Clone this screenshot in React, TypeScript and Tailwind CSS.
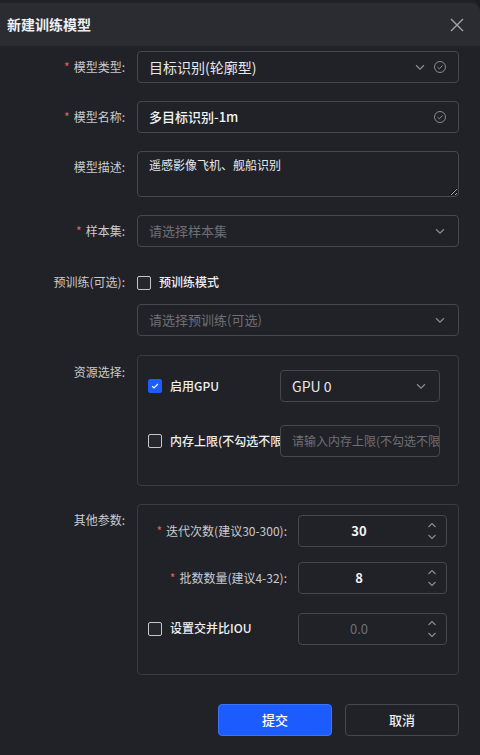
import React, { useState } from 'react';

const font = { fontFamily: '"Noto Sans CJK SC", "Noto Sans", sans-serif' };

// 下拉箭头
function ChevronDown({ className = '' }: { className?: string }) {
  return (
    <svg viewBox="0 0 16 16" className={className} fill="none" stroke="currentColor" strokeWidth="1.3">
      <path d="M3.5 6l4.5 4.5L12.5 6" />
    </svg>
  );
}

// 校验通过图标
function CheckCircle({ className = '' }: { className?: string }) {
  return (
    <svg viewBox="0 0 16 16" className={className} fill="none" stroke="currentColor" strokeWidth="1.1">
      <circle cx="8" cy="8" r="6.3" />
      <path d="M5.2 8.2l2 1.9 3.6-3.8" />
    </svg>
  );
}

function Stepper() {
  return (
    <div className="absolute right-[9px] top-0 flex h-full flex-col items-center justify-center gap-[6px] text-[#8d8e94]">
      <svg viewBox="0 0 10 6" className="h-[6px] w-[10px]" fill="none" stroke="currentColor" strokeWidth="1.1">
        <path d="M1.5 5L5 1.5 8.5 5" />
      </svg>
      <svg viewBox="0 0 10 6" className="h-[6px] w-[10px]" fill="none" stroke="currentColor" strokeWidth="1.1">
        <path d="M1.5 1L5 4.5 8.5 1" />
      </svg>
    </div>
  );
}

function Checkbox({ checked, onChange }: { checked: boolean; onChange: () => void }) {
  return (
    <button
      onClick={onChange}
      className={`flex h-[14px] w-[14px] shrink-0 items-center justify-center rounded-[2px] border ${
        checked ? 'border-[#1d5cff] bg-[#1d5cff]' : 'border-[#c5c6cb] bg-[#26272c]'
      }`}
    >
      {checked && (
        <svg viewBox="0 0 12 12" className="h-[10px] w-[10px]" fill="none" stroke="#fff" strokeWidth="1.4">
          <path d="M2.5 6.2l2.3 2.2 4.7-4.8" />
        </svg>
      )}
    </button>
  );
}

function Label({ text, required = false }: { text: string; required?: boolean }) {
  return (
    <div className="flex h-[32px] items-center justify-end whitespace-nowrap text-[12px] text-[#c9cacf]">
      {required && <span className="mr-[4px] text-[#e5605e]">*</span>}
      {text}
    </div>
  );
}

const boxCls = 'flex h-[32px] items-center rounded-[4px] border border-[#46474d] bg-[#212227] px-[11px]';

export default function App() {
  const [pretrain, setPretrain] = useState(false);
  const [gpu, setGpu] = useState(true);
  const [mem, setMem] = useState(false);
  const [iou, setIou] = useState(false);

  return (
    <div className="h-[755px] w-[480px] overflow-hidden bg-[#1c1d21]" style={font}>
      <div className="h-full rounded-tr-[9px] bg-[#212227] pt-[3px]">
        {/* 标题栏 */}
        <div className="flex h-[43px] items-center justify-between rounded-tr-[9px] bg-[#2b2c31] pl-[7px] pr-[15px]">
          <span className="text-[14px] font-bold text-[#eeeff2]">新建训练模型</span>
          <svg viewBox="0 0 16 16" className="h-[16px] w-[16px] text-[#a3a4a9]" fill="none" stroke="currentColor" strokeWidth="1.4">
            <path d="M2 2l12 12M14 2L2 14" />
          </svg>
        </div>

        {/* 表单 */}
        <div className="grid grid-cols-[125px_322px] gap-x-[12px] pt-[5px]">
          <Label text="模型类型:" required />
          <div className={`${boxCls} justify-between`}>
            <span className="text-[14px] text-[#e6e7ea]">目标识别(轮廓型)</span>
            <div className="flex items-center gap-[6px] text-[#8d8e94]">
              <ChevronDown className="h-[14px] w-[14px]" />
              <CheckCircle className="h-[14px] w-[14px]" />
            </div>
          </div>

          <div className="col-span-2 h-[18px]" />
          <Label text="模型名称:" required />
          <div className={`${boxCls} justify-between`}>
            <span className="text-[13px] font-medium text-[#f2f3f5]">多目标识别-1m</span>
            <CheckCircle className="h-[14px] w-[14px] text-[#8d8e94]" />
          </div>

          <div className="col-span-2 h-[18px]" />
          <Label text="模型描述:" />
          <textarea
            defaultValue="遥感影像飞机、舰船识别"
            className="h-[46px] resize-y rounded-[4px] border border-[#46474d] bg-[#212227] px-[11px] pt-[4px] text-[12px] leading-[18px] text-[#e6e7ea] outline-none"
          />

          <div className="col-span-2 h-[18px]" />
          <Label text="样本集:" required />
          <div className={`${boxCls} justify-between`}>
            <span className="text-[13px] text-[#6e6f75]">请选择样本集</span>
            <ChevronDown className="h-[14px] w-[14px] text-[#8d8e94]" />
          </div>

          <div className="col-span-2 h-[18px]" />
          <div className="flex h-[32px] items-start justify-end pt-[8px] text-[12px] text-[#c9cacf]">预训练(可选):</div>
          <div className="flex h-[32px] items-start gap-[8px] pt-[11px]">
            <Checkbox checked={pretrain} onChange={() => setPretrain(!pretrain)} />
            <span className="-mt-[3px] text-[12px] font-medium text-[#eeeff2]">预训练模式</span>
          </div>

          <div className="col-span-2 h-[7px]" />
          <div />
          <div className={`${boxCls} h-[31px] justify-between`}>
            <span className="text-[13px] text-[#6e6f75]">请选择预训练(可选)</span>
            <ChevronDown className="h-[14px] w-[14px] text-[#8d8e94]" />
          </div>

          <div className="col-span-2 h-[19px]" />
          <div className="flex h-[32px] items-start justify-end pt-[8px] text-[12px] text-[#c9cacf]">资源选择:</div>
          <div className="rounded-[4px] border border-[#3a3b41] pb-[28px] pl-[10px] pr-[18px] pt-[14px]">
            <div className="grid grid-cols-[132px_160px] gap-y-[23px]">
              <div className="flex h-[32px] items-center gap-[8px] overflow-hidden whitespace-nowrap">
                <Checkbox checked={gpu} onChange={() => setGpu(!gpu)} />
                <span className="text-[12px] font-medium text-[#eeeff2]">启用GPU</span>
              </div>
              <div className={`${boxCls} justify-between`}>
                <span className="text-[14px] text-[#e6e7ea]">GPU 0</span>
                <ChevronDown className="h-[14px] w-[14px] text-[#8d8e94]" />
              </div>
              <div className="flex h-[32px] items-center gap-[8px] overflow-hidden whitespace-nowrap">
                <Checkbox checked={mem} onChange={() => setMem(!mem)} />
                <span className="text-[12px] font-medium text-[#eeeff2]">内存上限(不勾选不限制)</span>
              </div>
              <div className={`${boxCls} overflow-hidden whitespace-nowrap`}>
                <span className="text-[12px] text-[#6e6f75]">请输入内存上限(不勾选不限制)</span>
              </div>
            </div>
          </div>

          <div className="col-span-2 h-[18px]" />
          <div className="flex h-[32px] items-start justify-end pt-[7px] text-[12px] text-[#c9cacf]">其他参数:</div>
          <div className="rounded-[4px] border border-[#3a3b41] pb-[29px] pl-[10px] pr-[11px] pt-[10px]">
            <div className="grid grid-cols-[139px_149px] gap-x-[11px]">
              <Label text="迭代次数(建议30-300):" required />
              <div className={`${boxCls} relative justify-center pr-[38px]`}>
                <span className="text-[13px] font-bold text-[#f2f3f5]">30</span>
                <Stepper />
              </div>
              <div className="col-span-2 h-[15px]" />
              <Label text="批数数量(建议4-32):" required />
              <div className={`${boxCls} relative justify-center pr-[38px]`}>
                <span className="text-[13px] font-bold text-[#f2f3f5]">8</span>
                <Stepper />
              </div>
              <div className="col-span-2 h-[19px]" />
              <div className="flex h-[32px] items-center gap-[8px] whitespace-nowrap">
                <Checkbox checked={iou} onChange={() => setIou(!iou)} />
                <span className="-mt-[3px] text-[12px] font-medium text-[#eeeff2]">设置交并比IOU</span>
              </div>
              <div className={`${boxCls} relative justify-center pr-[38px]`}>
                <span className="text-[13px] text-[#6e6f75]">0.0</span>
                <Stepper />
              </div>
            </div>
          </div>
        </div>

        {/* 按钮 */}
        <div className="mt-[29px] flex justify-end gap-[13px] pr-[21px]">
          <button className="h-[32px] w-[114px] rounded-[4px] border border-[#3d74ff] bg-[#1c5cff] text-[13px] font-medium text-white">
            提交
          </button>
          <button className="h-[32px] w-[114px] rounded-[4px] border border-[#46474d] bg-[#212227] text-[13px] font-medium text-[#eeeff2]">
            取消
          </button>
        </div>
      </div>
    </div>
  );
}
